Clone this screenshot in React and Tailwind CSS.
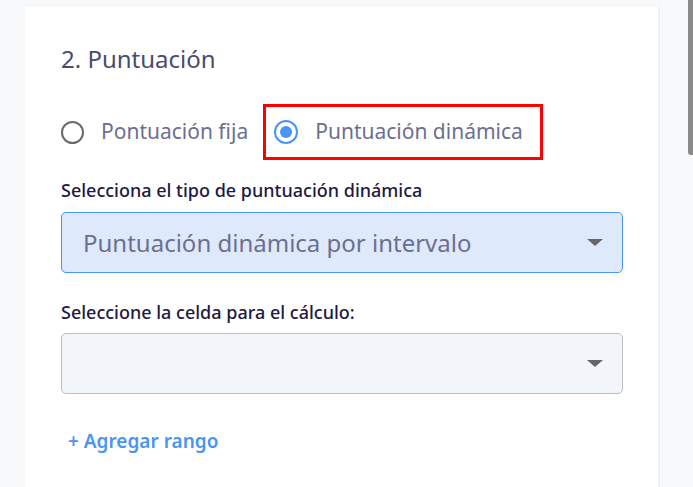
import React from "react";

export default function App() {
  return (
    <div className="relative w-[693px] h-[487px] overflow-hidden bg-[#f8f9fb]" style={{ fontFamily: '"Noto Sans", sans-serif' }}>
      <div className="flex h-full pt-[7px] pl-[25px]">
        <div className="w-[635px] h-full bg-white border-r-2 border-[#eef0f3] pl-[36px] pr-[36px]">
          <h2 className="mt-[37px] text-[24px] leading-[30px] text-[#4c4b6e]">2. Puntuación</h2>
          <div className="mt-[30px] flex items-center h-[56px]">
            <label className="flex items-center">
              <span className="w-[23px] h-[23px] rounded-full border-2 border-[#6a6a6a] bg-white" />
              <span className="ml-[17px] text-[21px] text-[#6c6f90]">Pontuación fija</span>
            </label>
            <div className="ml-[15px] h-[56px] w-[280px] border-[3px] border-[#ff0000] flex items-center pl-[8px]">
              <span className="w-[24px] h-[24px] rounded-full border-2 border-[#4a94f5] flex items-center justify-center">
                <span className="w-[12px] h-[12px] rounded-full bg-[#4a94f5]" />
              </span>
              <span className="ml-[17px] text-[21px] text-[#6c6f90]">Puntuación dinámica</span>
            </div>
          </div>
          <div className="mt-[18px] text-[18px] leading-[24px] font-medium text-[#22193f]">Selecciona el tipo de puntuación dinámica</div>
          <div className="mt-[10px] w-[562px] h-[61px] rounded-[5px] border border-[#4a94f5] bg-[#deeafc] flex items-center justify-between pl-[21px] pr-[19px]">
            <span className="text-[24px] text-[#6c6f90]">Puntuación dinámica por intervalo</span>
            <span className="w-0 h-0 border-l-[8px] border-r-[8px] border-t-[7px] border-l-transparent border-r-transparent border-t-[#666]" />
          </div>
          <div className="mt-[27px] text-[18px] leading-[24px] font-medium text-[#22193f]">Seleccione la celda para el cálculo:</div>
          <div className="mt-[9px] w-[562px] h-[61px] rounded-[5px] border border-[#bdbdc2] bg-[#f2f5fa] flex items-center justify-end pr-[19px]">
            <span className="w-0 h-0 border-l-[8px] border-r-[8px] border-t-[7px] border-l-transparent border-r-transparent border-t-[#666]" />
          </div>
          <div className="mt-[33px] ml-[7px] text-[19px] leading-[28px] font-semibold text-[#4a94f5]">+ Agregar rango</div>
        </div>
      </div>
      <div className="absolute right-0 top-0 w-[5px] h-[155px] bg-[#8a8a8a] rounded-bl-[3px]" />
    </div>
  );
}
